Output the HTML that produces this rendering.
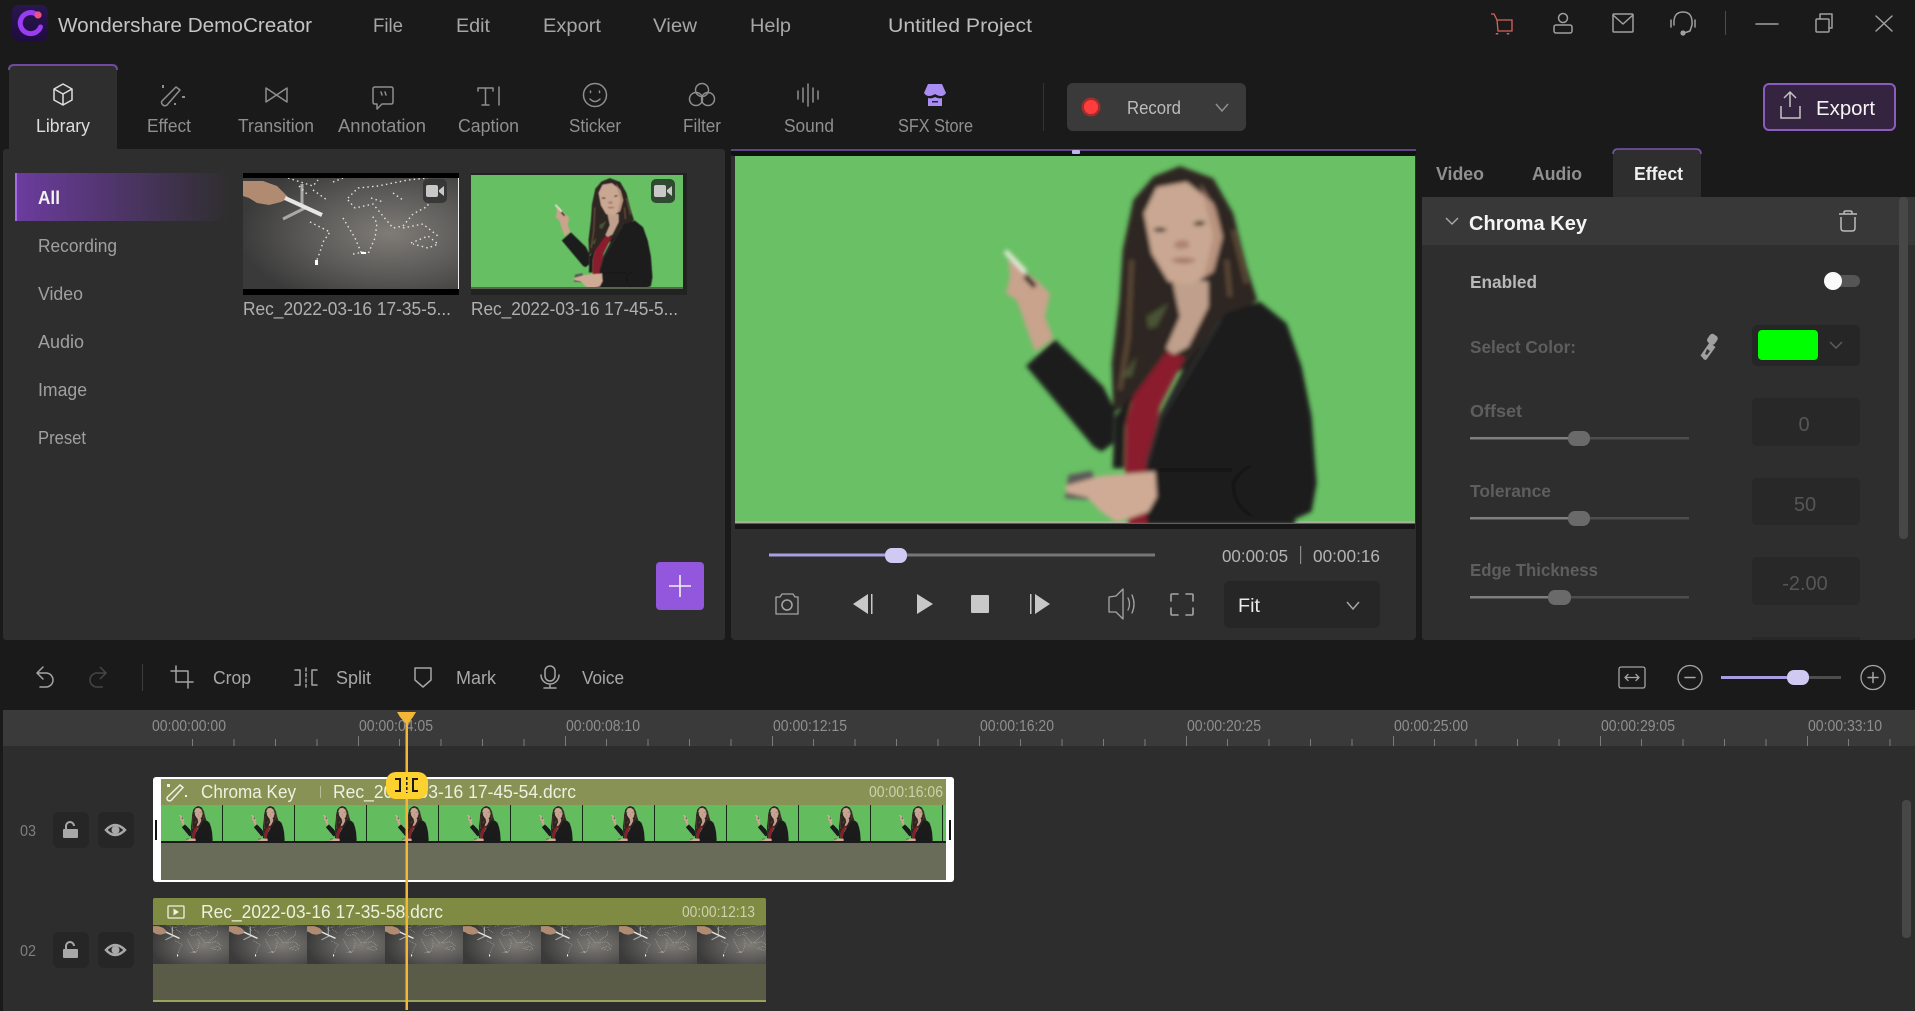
<!DOCTYPE html>
<html><head><meta charset="utf-8"><title>Wondershare DemoCreator</title>
<style>
html,body{margin:0;padding:0;background:#1a1a1a;width:1915px;height:1011px;overflow:hidden}
svg{display:block}
text{font-family:"Liberation Sans",sans-serif;font-size:19px}
.i{fill:none;stroke:#a5a5a5;stroke-width:1.5;stroke-linejoin:round;stroke-linecap:round}
.g{fill:#a8a8a8}
.nav{fill:#8f8f8f;font-size:18.5px}
.menu{fill:#a6a6a6;font-size:19.5px}
.side{fill:#a0a0a0;font-size:18px}
.t{fill:#a8a8a8;font-size:18px}
.rul{fill:#8f8f8f;font-size:15.5px}
.dim{fill:#5e5e5e;font-size:17.5px;font-weight:bold}
.val{fill:#565656;font-size:20px}
</style></head><body>
<svg xmlns="http://www.w3.org/2000/svg" width="1915" height="1011" viewBox="0 0 1915 1011">
<defs>
<linearGradient id="all" x1="0" x2="1"><stop offset="0" stop-color="#6c3c9f"/><stop offset="1" stop-color="#2e2e2e"/></linearGradient>
<linearGradient id="logo" x1="0" x2="0" y1="0" y2="1"><stop offset="0" stop-color="#2a1650"/><stop offset="1" stop-color="#1f0c40"/></linearGradient>
<radialGradient id="board" cx=".68" cy=".5" r=".7"><stop offset="0" stop-color="#7f7c76"/><stop offset=".55" stop-color="#5a5957"/><stop offset="1" stop-color="#3a3a3a"/></radialGradient>
<filter id="b1" x="-5%" y="-5%" width="110%" height="110%"><feGaussianBlur stdDeviation="6"/></filter>
<filter id="b2" x="-5%" y="-5%" width="110%" height="110%"><feGaussianBlur stdDeviation="5"/></filter>
<pattern id="ticks" x="151" y="736" width="207" height="10" patternUnits="userSpaceOnUse">
<rect x="0" y="0" width="1" height="10" fill="#7c7c7c"/><rect x="41" y="3" width="1" height="7" fill="#7c7c7c"/><rect x="82.5" y="3" width="1" height="7" fill="#7c7c7c"/><rect x="124" y="3" width="1" height="7" fill="#7c7c7c"/><rect x="165.5" y="3" width="1" height="7" fill="#7c7c7c"/>
</pattern>
<clipPath id="cv"><rect x="735" y="156" width="680" height="367"/></clipPath>
<clipPath id="ct"><rect x="471" y="175" width="212" height="112"/></clipPath>
<clipPath id="c3"><rect x="161" y="805" width="785" height="36"/></clipPath>
<clipPath id="c2"><rect x="153" y="925" width="613" height="39"/></clipPath>
<clipPath id="cm"><rect width="216" height="111"/></clipPath>

<g id="woman">
<path fill="#2f2520" d="M540 48 L640 85 L700 190 L740 350 L772 450 L720 490 L640 570 L560 650 L400 750 L340 790 L335 640 L358 450 L368 300 L400 150 L460 80Z"/>
<path fill="none" stroke="#5a4636" stroke-width="14" d="M395 330 L385 560 L360 720 M740 400 L700 240 M690 440 L680 330"/>
<path fill="#5c7a45" opacity=".55" d="M440 500 L505 460 L470 530 L445 535Z M365 680 L410 620 L395 680Z"/>
<path fill="#c0a08c" d="M515 380 L625 395 L625 470 L565 590 L520 615 L498 595 L540 500Z"/>
<path fill="#c9a792" d="M432 190 L470 112 L560 96 L640 160 L668 260 L640 365 L575 404 L505 394 L455 310Z"/>
<path fill="#b08a76" d="M600 100 L650 180 L668 260 L640 365 L610 385 L640 260Z" opacity=".7"/>
<path fill="#3a2a24" d="M458 240 Q480 226 502 240 Q480 252 458 240Z M578 222 Q598 206 618 218 Q600 234 578 222Z"/>
<path fill="#a77a6a" d="M512 330 Q550 315 590 330 Q550 352 512 330Z"/>
<path fill="#ae8470" d="M520 290 Q545 305 570 288 L560 270 L530 272Z"/>
<path fill="#8a1b2d" d="M500 605 L555 622 L480 770 L445 940 L445 1125 L385 1125 L375 950 L378 820 L400 740Z"/>
<path fill="#1b1b1b" d="M680 488 L780 455 L860 520 L905 650 L935 800 L950 1000 L935 1085 L885 1108 L885 1125 L440 1125 L440 950 L475 800 L560 640Z"/>
<path fill="#1b1b1b" d="M345 800 L400 730 L375 830 L372 955 L338 955Z"/>
<path fill="#1b1b1b" d="M165 568 L78 648 L280 890 L305 905 L340 880 L345 780 L310 710Z"/>
<path fill="none" stroke="#2f2f2f" stroke-width="10" d="M660 510 L480 810 L440 945"/>
<path fill="none" stroke="#111" stroke-width="6" d="M700 1000 Q720 960 760 945 M700 1000 Q700 1070 760 1100 M470 960 H700"/>
<path fill="#c9a38c" d="M25 330 L110 390 L150 430 L135 500 L160 565 L105 605 L75 520 L50 450 L18 430 L30 380Z"/>
<path stroke="#e3e9d6" stroke-width="15" fill="none" stroke-linecap="round" d="M20 308 L72 362"/>
<path stroke="#111" stroke-width="15" fill="none" d="M75 378 L105 410"/>
<path fill="#5c5a5a" d="M205 975 L275 962 L295 1020 L290 1050 L195 1045Z"/>
<path fill="#cfab96" d="M195 1008 L300 978 L465 965 L470 1040 L445 1085 L350 1118 L300 1082 L262 1042 L200 1028Z"/>
</g>

<g id="map" clip-path="url(#cm)">
<rect width="216" height="111" fill="url(#board)"/>
<path fill="#b08b72" d="M0 3 L20 3 L34 8 L46 20 L38 24 L26 27 L14 25 L6 20 L0 18Z"/>
<path stroke="#a9a9a5" stroke-width="3" d="M59 6 L59 26 M40 41 L62 30" fill="none"/>
<path stroke="#e6e6e2" stroke-width="4" d="M42 20 L79 37" fill="none"/>
<g fill="none" stroke="#e4e4e0" stroke-width="1.4" stroke-dasharray="1.5 3.2">
<path d="M45 0 L70 8 L75 2 M90 4 L100 0 M67 44 L87 54 L80 64 L77 74 L73 84"/>
<path d="M105 20 L115 10 L135 8 L165 2 L185 0"/>
<path d="M105 22 L112 30 L130 26 L140 38 L150 50 L160 48 L170 36 L185 28 L184 14"/>
<path d="M100 40 L112 60 L118 74 L125 76 L132 60 L134 45 L128 36"/>
<path d="M160 50 L180 46 L195 58 M168 65 L185 58 L195 66 L185 70 L170 66"/>
<path d="M110 76 L122 74 M128 20 L140 24 M150 15 L160 22 M56 8 L66 18 M70 12 L84 22"/>
</g>
<path fill="#fff" d="M72 82h3v5h-3z M118 74h5v2h-5z"/>
</g>

<g id="cam"><rect x="-9" y="-6" width="12" height="12" rx="2" fill="#c8c8c8"/><path d="M4 -1 L9 -5 V5 L4 1Z" fill="#c8c8c8"/></g>
</defs>

<!-- base -->
<rect width="1915" height="1011" fill="#1a1a1a"/>

<!-- title bar -->
<rect x="12" y="5" width="36" height="36" rx="7" fill="url(#logo)"/>
<path d="M35 13.5 A10.5 10.5 0 1 0 40.5 27" fill="none" stroke="#9a3cf2" stroke-width="5" stroke-linecap="round"/>
<circle cx="38" cy="15" r="3.6" fill="#ee4f86"/>
<text x="58" y="32" textLength="254" lengthAdjust="spacingAndGlyphs" fill="#c4c4c4" style="font-size:20px">Wondershare DemoCreator</text>
<text x="373" y="32" textLength="30" lengthAdjust="spacingAndGlyphs" class="menu">File</text>
<text x="456" y="32" textLength="34" lengthAdjust="spacingAndGlyphs" class="menu">Edit</text>
<text x="543" y="32" textLength="58" lengthAdjust="spacingAndGlyphs" class="menu">Export</text>
<text x="653" y="32" textLength="44" lengthAdjust="spacingAndGlyphs" class="menu">View</text>
<text x="750" y="32" textLength="41" lengthAdjust="spacingAndGlyphs" class="menu">Help</text>
<text x="888" y="32" textLength="144" lengthAdjust="spacingAndGlyphs" fill="#bdbdbd" style="font-size:19.5px">Untitled Project</text>

<path d="M1491 14 h3 l3 6 h15 v11 h-14 l-1 -11" fill="none" stroke="#d8635c" stroke-width="1.3"/>
<path d="M1497 33 v1.5 M1508 33 v1.5" stroke="#d8635c" stroke-width="2.5"/>
<g class="i" style="stroke:#a0a0a0">
<circle cx="1563" cy="18" r="4.5"/><rect x="1554" y="25" width="18" height="8" rx="2"/>
<rect x="1613" y="14" width="20" height="18" rx="1"/><path d="M1613 15 L1623 24 L1633 15"/>
<path d="M1674 25 Q1673 12 1683 12 Q1693 12 1692 25 L1690 31 L1684 33"/><path d="M1671 20 v7 M1695 20 v7"/>
<path d="M1756 24 h22" /><rect x="1816" y="19" width="13" height="13" rx="1"/><path d="M1820 19 v-5 h12 v14 h-3"/>
<path d="M1876 16 L1892 31 M1892 16 L1876 31"/>
</g>
<circle cx="1683" cy="33" r="2.6" fill="#a0a0a0"/>
<rect x="1725" y="11" width="1" height="24" fill="#4d4d4d"/>

<!-- top tabs -->
<path d="M9 149 V70 q0 -5 5 -5 H112 q5 0 5 5 V149Z" fill="#2e2e2e"/>
<path d="M9 70 q0 -5 5 -5 H112 q5 0 5 5" fill="none" stroke="#6f4b9e" stroke-width="2"/>
<path d="M63 84 l9 5 v11 l-9 5 l-9 -5 v-11z M54 89 l9 5 l9 -5 M63 94 v11" fill="none" stroke="#dedede" stroke-width="1.5" stroke-linejoin="round"/>
<g class="i" style="stroke:#8e8e8e">
<path d="M176 87 l4 3 l-13 15 q-3 2 -5 -1 q-1 -2 0 -3z"/>
<path d="M266 88 L287 102 V88 L266 102Z"/>
<path d="M375 87 h16 q2 0 2 2 v13 q0 2 -2 2 h-9 l-5 5 v-5 h-2 q-2 0 -2 -2 v-13 q0 -2 2 -2z M381 92 l1 3 M385 92 l1 3"/>
<path d="M478 91 v-3 h15 v3 M485.5 88 v17 M482 105 h7 M499 87 v18"/>
<circle cx="595" cy="95" r="11.5"/><path d="M590 99 q5 5 10 0 M590.5 91 v1.5 M599.5 91 v1.5"/>
<circle cx="702" cy="90" r="6.5"/><circle cx="696" cy="99" r="6.5"/><circle cx="708" cy="99" r="6.5"/>
<path d="M798 91 v8 M803 88 v14 M808 84 v22 M813 88 v14 M818 91 v8"/>
</g>
<path d="M162 85h2v3h-2z M182 96h3v2h-3z M174 103h2v2h-2z" fill="#8e8e8e"/>
<path d="M928 84 h14 l4 9 q-2 3 -5 3 q-3 0 -6 -2 q-3 2 -6 2 q-3 0 -5 -3z M928 98 q4 1 7 -1 q4 2 7 1 v8 h-14z" fill="#a98df2"/>
<rect x="932" y="101" width="6" height="1.5" fill="#2b2440"/>
<text x="36" y="132" textLength="54" lengthAdjust="spacingAndGlyphs" fill="#dcdcdc" style="font-size:18.5px">Library</text>
<text x="147" y="132" textLength="44" lengthAdjust="spacingAndGlyphs" class="nav">Effect</text>
<text x="238" y="132" textLength="76" lengthAdjust="spacingAndGlyphs" class="nav">Transition</text>
<text x="338" y="132" textLength="88" lengthAdjust="spacingAndGlyphs" class="nav">Annotation</text>
<text x="458" y="132" textLength="61" lengthAdjust="spacingAndGlyphs" class="nav">Caption</text>
<text x="569" y="132" textLength="52" lengthAdjust="spacingAndGlyphs" class="nav">Sticker</text>
<text x="683" y="132" textLength="38" lengthAdjust="spacingAndGlyphs" class="nav">Filter</text>
<text x="784" y="132" textLength="50" lengthAdjust="spacingAndGlyphs" class="nav">Sound</text>
<text x="898" y="132" textLength="75" lengthAdjust="spacingAndGlyphs" class="nav">SFX Store</text>
<rect x="1043" y="83" width="1" height="48" fill="#333"/>
<rect x="1067" y="83" width="179" height="48" rx="6" fill="#3a3a3a"/>
<circle cx="1091" cy="107" r="9.5" fill="#a32c2c"/><circle cx="1091" cy="107" r="7" fill="#ff3d3d"/>
<text x="1127" y="114" textLength="54" lengthAdjust="spacingAndGlyphs" fill="#bcbcbc" style="font-size:18px">Record</text>
<path d="M1216 104 l6 7 l6 -7" fill="none" stroke="#8f8f8f" stroke-width="1.5"/>
<rect x="1764" y="84" width="131" height="46" rx="5" fill="#35243f" stroke="#8a5cc2" stroke-width="2"/>
<path d="M1790 107 V92 M1784 98 L1790 92 L1796 98 M1781 106 V118 H1800 V106" fill="none" stroke="#c4c4c4" stroke-width="1.5"/>
<text x="1816" y="115" textLength="59" lengthAdjust="spacingAndGlyphs" fill="#f4f4f4" style="font-size:20px">Export</text>

<!-- library panel -->
<rect x="3" y="149" width="722" height="491" rx="3" fill="#2e2e2e"/>
<rect x="15" y="173" width="215" height="48" fill="url(#all)"/>
<rect x="15" y="173" width="2" height="48" fill="#a56ae8"/>
<text x="38" y="204" textLength="22" lengthAdjust="spacingAndGlyphs" fill="#f2f2f2" style="font-size:18px;font-weight:bold">All</text>
<text x="38" y="252" textLength="79" lengthAdjust="spacingAndGlyphs" class="side">Recording</text>
<text x="38" y="300" textLength="45" lengthAdjust="spacingAndGlyphs" class="side">Video</text>
<text x="38" y="348" textLength="46" lengthAdjust="spacingAndGlyphs" class="side">Audio</text>
<text x="38" y="396" textLength="49" lengthAdjust="spacingAndGlyphs" class="side">Image</text>
<text x="38" y="444" textLength="48" lengthAdjust="spacingAndGlyphs" class="side">Preset</text>

<rect x="243" y="173" width="216" height="122" fill="#000"/>
<use href="#map" x="243" y="178"/>
<rect x="458" y="178" width="1" height="111" fill="#eee"/>
<rect x="423" y="179" width="24" height="24" rx="5" fill="#353535" opacity=".92"/>
<use href="#cam" x="435" y="191"/>
<rect x="471" y="173" width="216" height="122" fill="#222"/>
<rect x="471" y="175" width="212" height="112" fill="#67bf63"/>
<rect x="471" y="287" width="212" height="2" fill="#57654f"/>
<g clip-path="url(#ct)"><g filter="url(#b2)" transform="translate(471,175) scale(.312) translate(-735,-156) translate(1000,150) scale(.3333)"><use href="#woman"/></g></g>
<rect x="651" y="179" width="24" height="24" rx="5" fill="#2f4a30"/>
<use href="#cam" x="663" y="191"/>
<text x="243" y="315" textLength="208" lengthAdjust="spacingAndGlyphs" fill="#b0b0b0" style="font-size:18px">Rec_2022-03-16 17-35-5...</text>
<text x="471" y="315" textLength="207" lengthAdjust="spacingAndGlyphs" fill="#b0b0b0" style="font-size:18px">Rec_2022-03-16 17-45-5...</text>
<rect x="656" y="562" width="48" height="48" rx="4" fill="#9257dd"/>
<path d="M680 575 v22 M669 586 h22" stroke="#f0f0f0" stroke-width="1.6"/>

<!-- preview panel -->
<rect x="731" y="149" width="685" height="491" rx="4" fill="#2e2e2e"/>
<rect x="731" y="149" width="685" height="7" rx="2" fill="#0d130d"/>
<rect x="731" y="149" width="685" height="2" fill="#5f4386"/>
<rect x="1072" y="150" width="8" height="4" rx="1" fill="#c2b4ee"/>
<rect x="735" y="156" width="680" height="367" fill="#69c065"/>
<rect x="735" y="523" width="680" height="6" fill="#161616"/>
<rect x="735" y="521" width="680" height="2.5" fill="#a7ae9e"/>
<g clip-path="url(#cv)"><g filter="url(#b1)" transform="translate(1000,150) scale(.3333)"><use href="#woman"/></g></g>
<rect x="769" y="553.5" width="386" height="3" fill="#777"/>
<rect x="769" y="553.5" width="127" height="3" fill="#ac9fe0"/>
<rect x="885" y="548" width="22" height="15" rx="7" fill="#d0c9f2"/>
<text x="1222" y="562" textLength="66" lengthAdjust="spacingAndGlyphs" fill="#b4b4b4" style="font-size:17.5px">00:00:05</text>
<rect x="1300" y="546" width="1.2" height="18" fill="#8a8a8a"/>
<text x="1313" y="562" textLength="67" lengthAdjust="spacingAndGlyphs" fill="#b4b4b4" style="font-size:17.5px">00:00:16</text>
<g class="i">
<path d="M776 597 h4 l2 -3 h11 l2 3 h3 v17 h-22z" style="stroke-width:1.3"/><circle cx="787" cy="605" r="5"/>
<path d="M1109 597 l7 -1 l7 -7 v30 l-7 -7 h-7z M1128 598 q3 6 0 12 M1132 595 q4 9 0 18" style="stroke-width:1.3"/>
<path d="M1171 601 v-6 q0 -1 1 -1 h6 M1186 594 h6 q1 0 1 1 v6 M1193 608 v6 q0 1 -1 1 h-6 M1178 615 h-6 q-1 0 -1 -1 v-6" style="stroke-width:1.6"/>
</g>
<path d="M853 604 L868 594 V614Z" fill="#c8c8c8"/><rect x="871" y="594" width="1.5" height="20" fill="#c8c8c8"/>
<path d="M917 594 L933 604 L917 614Z" fill="#c8c8c8"/>
<rect x="971" y="595" width="18" height="18" rx="1" fill="#c8c8c8"/>
<rect x="1030" y="594" width="1.5" height="20" fill="#c8c8c8"/><path d="M1035 594 L1050 604 L1035 614Z" fill="#c8c8c8"/>
<rect x="1224" y="581" width="156" height="47" rx="5" fill="#262626"/>
<text x="1238" y="612" textLength="22" lengthAdjust="spacingAndGlyphs" fill="#ececec" style="font-size:19px">Fit</text>
<path d="M1347 602 l6 7 l6 -7" fill="none" stroke="#a5a5a5" stroke-width="1.5"/>

<!-- right panel -->
<rect x="1422" y="197" width="493" height="443" rx="3" fill="#2e2e2e"/>
<rect x="1422" y="197" width="493" height="48" fill="#383838"/>
<rect x="1899" y="197" width="9" height="342" rx="4" fill="#474747"/>
<path d="M1613 197 V154 q0 -5 5 -5 H1696 q5 0 5 5 V197Z" fill="#2e2e2e"/>
<path d="M1613 154 q0 -5 5 -5 H1696 q5 0 5 5" fill="none" stroke="#7a55ad" stroke-width="1.5"/>
<text x="1436" y="180" textLength="48" lengthAdjust="spacingAndGlyphs" fill="#909090" style="font-size:18px;font-weight:bold">Video</text>
<text x="1532" y="180" textLength="50" lengthAdjust="spacingAndGlyphs" fill="#909090" style="font-size:18px;font-weight:bold">Audio</text>
<text x="1634" y="180" textLength="49" lengthAdjust="spacingAndGlyphs" fill="#f0f0f0" style="font-size:18px;font-weight:bold">Effect</text>
<path d="M1446 218 l6 6 l6 -6" fill="none" stroke="#aaa" stroke-width="1.4"/>
<text x="1469" y="230" textLength="118" lengthAdjust="spacingAndGlyphs" fill="#f5f5f5" style="font-size:20px;font-weight:bold">Chroma Key</text>
<path d="M1839 214 h18 M1844 214 v-1.5 q0 -1.5 1.5 -1.5 h5 q1.5 0 1.5 1.5 v1.5 M1841 217 v11 q0 3 3 3 h8 q3 0 3 -3 v-11" fill="none" stroke="#bcbcbc" stroke-width="1.5"/>
<text x="1470" y="288" textLength="67" lengthAdjust="spacingAndGlyphs" fill="#b8b8b8" style="font-size:17.5px;font-weight:bold">Enabled</text>
<rect x="1835" y="275" width="25" height="12" rx="6" fill="#555"/>
<circle cx="1833" cy="281" r="9" fill="#fafafa"/>
<text x="1470" y="353" textLength="106" lengthAdjust="spacingAndGlyphs" class="dim">Select Color:</text>
<path d="M1703 358 l-2.5 -2.5 l9 -13 l6 4.5 l-9 12.5 q-2 1 -3.5 -1z" fill="#a0a0a0"/>
<rect x="1708" y="334" width="9" height="10" rx="3" transform="rotate(35 1712 339)" fill="#a0a0a0"/>
<path d="M1707 349 l3 2 l-3 4 l-2 -1z" fill="#333"/>
<rect x="1752" y="325" width="108" height="41" rx="5" fill="#262626"/>
<rect x="1758" y="330" width="60" height="30" rx="4" fill="#00ff00"/>
<path d="M1830 342 l6 6 l6 -6" fill="none" stroke="#5f5f5f" stroke-width="1.4"/>

<text x="1470" y="417" textLength="52" lengthAdjust="spacingAndGlyphs" class="dim">Offset</text>
<rect x="1470" y="437" width="219" height="2.5" fill="#4d4d4d"/><rect x="1470" y="437" width="108" height="2.5" fill="#7f7f7f"/>
<rect x="1568" y="431" width="22" height="15" rx="7" fill="#6a6a6a"/>
<rect x="1752" y="398" width="108" height="48" rx="5" fill="#282828"/>
<text x="1804" y="431" text-anchor="middle" class="val">0</text>

<text x="1470" y="497" textLength="81" lengthAdjust="spacingAndGlyphs" class="dim">Tolerance</text>
<rect x="1470" y="517" width="219" height="2.5" fill="#4d4d4d"/><rect x="1470" y="517" width="108" height="2.5" fill="#7f7f7f"/>
<rect x="1568" y="511" width="22" height="15" rx="7" fill="#6a6a6a"/>
<rect x="1752" y="478" width="108" height="47" rx="5" fill="#282828"/>
<text x="1805" y="511" text-anchor="middle" class="val">50</text>

<text x="1470" y="576" textLength="128" lengthAdjust="spacingAndGlyphs" class="dim">Edge Thickness</text>
<rect x="1470" y="596" width="219" height="2.5" fill="#4d4d4d"/><rect x="1470" y="596" width="88" height="2.5" fill="#7f7f7f"/>
<rect x="1548" y="590" width="23" height="15" rx="7" fill="#6a6a6a"/>
<rect x="1752" y="557" width="108" height="48" rx="5" fill="#282828"/>
<text x="1805" y="590" text-anchor="middle" class="val">-2.00</text>
<rect x="1752" y="637" width="108" height="3" fill="#282828"/>

<!-- toolbar -->
<g class="i">
<path d="M43 667 L37 673 L43 679 M37 673 H46 A7 7 0 0 1 46 687 H40"/>
<path d="M176 666 V682 H193 M171 671 H188 V688" />
<path d="M295 670 h5 v15 h-5 M317 670 h-5 v15 h5"/>
<path d="M306 668 v19" stroke-dasharray="3 2.5"/>
<path d="M415 668 h16 v12 l-8 7 l-8 -7z"/>
<rect x="545" y="666" width="10" height="15" rx="5"/><path d="M541 675 a9 9 0 0 0 18 0 M550 684 v4 M544 688 h12"/>
<rect x="1619" y="667" width="26" height="21" rx="2" style="stroke-width:1.3"/>
<path d="M1625 677.5 h14 M1628 674.5 l-3 3 l3 3 M1636 674.5 l3 3 l-3 3" style="stroke-width:1.3"/>
<circle cx="1690" cy="677.5" r="12" style="stroke-width:1.3"/><path d="M1685 677.5 h10"/>
<circle cx="1873" cy="677.5" r="12" style="stroke-width:1.3"/><path d="M1868 677.5 h10 M1873 672.5 v10"/>
</g>
<path d="M100 667 L106 673 L100 679 M106 673 H97 A7 7 0 0 0 97 687 H103" fill="none" stroke="#454545" stroke-width="1.5"/>
<rect x="142" y="664" width="1" height="27" fill="#3c3c3c"/>
<text x="213" y="684" textLength="38" lengthAdjust="spacingAndGlyphs" class="t">Crop</text>
<text x="336" y="684" textLength="35" lengthAdjust="spacingAndGlyphs" class="t">Split</text>
<text x="456" y="684" textLength="40" lengthAdjust="spacingAndGlyphs" class="t">Mark</text>
<text x="582" y="684" textLength="42" lengthAdjust="spacingAndGlyphs" class="t">Voice</text>
<rect x="1721" y="676" width="120" height="3" fill="#4d4d4d"/><rect x="1721" y="676" width="77" height="3" fill="#a99ce0"/>
<rect x="1787" y="670" width="22" height="15" rx="7" fill="#d0c9f2"/>

<!-- timeline -->
<rect x="3" y="710" width="1912" height="301" fill="#2d2d2d"/>
<rect x="3" y="710" width="1912" height="36" fill="#3a3a3a"/>
<rect x="152" y="736" width="1763" height="10" fill="url(#ticks)"/>
<text x="152" y="731" textLength="74" lengthAdjust="spacingAndGlyphs" class="rul">00:00:00:00</text>
<text x="359" y="731" textLength="74" lengthAdjust="spacingAndGlyphs" class="rul">00:00:04:05</text>
<text x="566" y="731" textLength="74" lengthAdjust="spacingAndGlyphs" class="rul">00:00:08:10</text>
<text x="773" y="731" textLength="74" lengthAdjust="spacingAndGlyphs" class="rul">00:00:12:15</text>
<text x="980" y="731" textLength="74" lengthAdjust="spacingAndGlyphs" class="rul">00:00:16:20</text>
<text x="1187" y="731" textLength="74" lengthAdjust="spacingAndGlyphs" class="rul">00:00:20:25</text>
<text x="1394" y="731" textLength="74" lengthAdjust="spacingAndGlyphs" class="rul">00:00:25:00</text>
<text x="1601" y="731" textLength="74" lengthAdjust="spacingAndGlyphs" class="rul">00:00:29:05</text>
<text x="1808" y="731" textLength="74" lengthAdjust="spacingAndGlyphs" class="rul">00:00:33:10</text>
<rect x="1902" y="800" width="9" height="138" rx="4" fill="#474747"/>

<!-- track controls -->
<text x="20" y="836" textLength="16" lengthAdjust="spacingAndGlyphs" fill="#7f7f7f" style="font-size:15.5px">03</text>
<text x="20" y="956" textLength="16" lengthAdjust="spacingAndGlyphs" fill="#7f7f7f" style="font-size:15.5px">02</text>
<g id="tc3">
<rect x="53" y="812" width="36" height="36" rx="6" fill="#262626"/><rect x="98" y="812" width="36" height="36" rx="6" fill="#262626"/>
<rect x="63" y="829" width="15" height="9" rx="1" fill="#a8a8a8"/><path d="M66 829 V826 a4 4 0 0 1 8 0" fill="none" stroke="#a8a8a8" stroke-width="2"/>
<path d="M106 830 Q115 820 125 830 Q115 840 106 830Z" fill="none" stroke="#a8a8a8" stroke-width="2.5"/><circle cx="115.5" cy="830" r="4" fill="#a8a8a8"/>
</g>
<use href="#tc3" y="120"/>

<!-- clip 03 -->
<rect x="153" y="777" width="801" height="105" rx="3" fill="#fff"/>
<rect x="161" y="779" width="785" height="26" fill="#879254"/>
<rect x="161" y="805" width="785" height="38" fill="#63bd5f"/>
<rect x="161" y="843" width="785" height="37" fill="#686c58"/>
<rect x="161" y="841" width="785" height="2" fill="#1b1b1b"/>
<g clip-path="url(#c3)">
<g id="f3"><g transform="translate(151,805) scale(.106) translate(-735,-156) translate(1000,150) scale(.3333)"><use href="#woman"/></g><rect x="222" y="805" width="1" height="38" fill="#152a15"/></g>
<use href="#f3" x="72"/><use href="#f3" x="144"/><use href="#f3" x="216"/><use href="#f3" x="288"/><use href="#f3" x="360"/><use href="#f3" x="432"/><use href="#f3" x="504"/><use href="#f3" x="576"/><use href="#f3" x="648"/><use href="#f3" x="720"/>
</g>
<rect x="155" y="820" width="2" height="20" fill="#111"/><rect x="949" y="820" width="2" height="20" fill="#111"/>
<path d="M180 785 l3 2.5 l-12 13 q-2 1 -3.5 -.5 q-1 -2 0 -3z" fill="none" stroke="#f0f0e8" stroke-width="1.5"/>
<path d="M167 784h3v3h-3z M185 795h2v2h-2z" fill="#f0f0e8"/>
<text x="201" y="798" textLength="95" lengthAdjust="spacingAndGlyphs" fill="#eef0e2" style="font-size:18px">Chroma Key</text>
<rect x="320" y="786" width="1" height="12" fill="#b8bd95"/>
<text x="333" y="798" textLength="243" lengthAdjust="spacingAndGlyphs" fill="#eef0e2" style="font-size:18px">Rec_2022-03-16 17-45-54.dcrc</text>
<text x="869" y="797" textLength="74" lengthAdjust="spacingAndGlyphs" fill="#cdd1ad" style="font-size:15.5px">00:00:16:06</text>

<!-- clip 02 -->
<rect x="153" y="898" width="613" height="104" rx="2" fill="#5a5c47"/>
<path d="M153 925 V900 q0 -2 2 -2 H764 q2 0 2 2 V925Z" fill="#7f8a42"/>
<rect x="153" y="1000" width="613" height="2" fill="#9aa35c"/>
<g clip-path="url(#c2)">
<g id="f2"><g transform="translate(151,925) scale(.361)"><use href="#map"/></g><rect x="229" y="925" width="1" height="39" fill="#f4f4f4"/></g>
<use href="#f2" x="78"/><use href="#f2" x="156"/><use href="#f2" x="234"/><use href="#f2" x="312"/><use href="#f2" x="390"/><use href="#f2" x="468"/><use href="#f2" x="546"/>
</g>
<rect x="168" y="906" width="16" height="12" rx="1" fill="none" stroke="#f0f0e8" stroke-width="1.3"/><path d="M173.5 908.5 L179 912 L173.5 915.5Z" fill="#f0f0e8"/>
<text x="201" y="918" textLength="242" lengthAdjust="spacingAndGlyphs" fill="#eef0e2" style="font-size:18px">Rec_2022-03-16 17-35-58.dcrc</text>
<text x="682" y="917" textLength="73" lengthAdjust="spacingAndGlyphs" fill="#cdd1ad" style="font-size:15.5px">00:00:12:13</text>

<!-- playhead -->
<rect x="405.5" y="712" width="2.5" height="298" fill="#f3b636"/>
<path d="M397 712 H416 L413 717 L407 725 L400 717Z" fill="#f3b636"/>
<rect x="386" y="772" width="42" height="27" rx="10" fill="#fdd12f"/>
<path d="M395 779 h5 v12 h-5 M418 779 h-5 v12 h5" fill="none" stroke="#1a1a1a" stroke-width="2"/>
<path d="M406.8 777 v16" stroke="#1a1a1a" stroke-width="1.5" stroke-dasharray="3 2"/>
</svg>
</body></html>
